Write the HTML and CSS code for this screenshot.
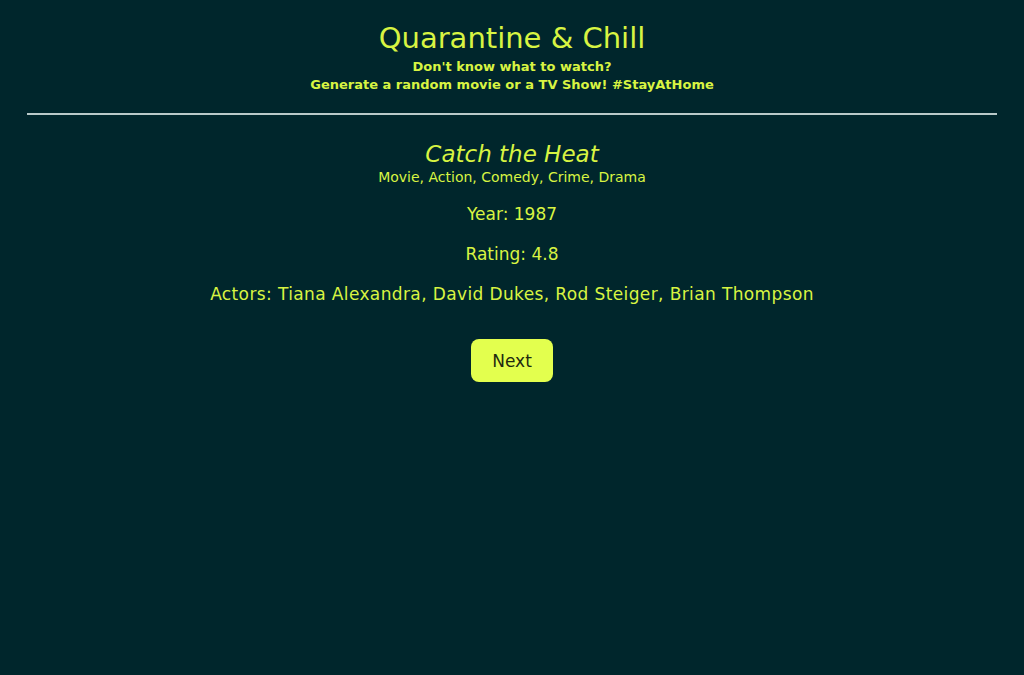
FILE: index.html
```html
<!DOCTYPE html>
<html lang="en">
<head>
<meta charset="utf-8">
<title>Quarantine &amp; Chill</title>
<link rel="stylesheet" href="styles.css">
</head>
<body>
<header class="header">
  <h1 class="title">Quarantine &amp; Chill</h1>
  <p class="tagline">Don't know what to watch?<br>Generate a random movie or a TV Show! #StayAtHome</p>
</header>
<hr class="divider">
<main class="show">
  <h2 class="show-name">Catch the Heat</h2>
  <p class="genres">Movie, Action, Comedy, Crime, Drama</p>
  <p class="info">Year: 1987</p>
  <p class="info">Rating: 4.8</p>
  <p class="info actors">Actors: Tiana Alexandra, David Dukes, Rod Steiger, Brian Thompson</p>
  <button class="next" type="button">Next</button>
</main>
</body>
</html>
```
FILE: styles.css
```css
html, body {
  margin: 0;
  padding: 0;
}
body {
  background: #00262c;
  color: #d8f442;
  font-family: "DejaVu Sans", "Open Sans", sans-serif;
  text-align: center;
  padding: 0 27px;
  min-height: 675px;
  box-sizing: border-box;
}
.header {
  padding-top: 20px;
}
.title {
  margin: 0;
  font-size: 29px;
  font-weight: 500;
  line-height: 36px;
}
.tagline {
  margin: 2px 0 0;
  font-size: 13px;
  font-weight: bold;
  line-height: 18px;
}
.divider {
  margin: 19px 0 0;
  border: 0;
  height: 2px;
  background: #b9c9c9;
}
.show {
  display: flex;
  flex-direction: column;
  align-items: center;
  padding-top: 25px;
}
.show-name {
  margin: 0;
  font-size: 23px;
  font-style: italic;
  font-weight: 500;
  line-height: 28px;
}
.genres {
  margin: 0;
  font-size: 14px;
  line-height: 18px;
}
.info {
  margin: 16px 0 0;
  font-size: 17px;
  line-height: 24px;
}
.actors {
  letter-spacing: 0.38px;
}
.next {
  margin-top: 33px;
  width: 82px;
  height: 43px;
  border: 0;
  border-radius: 8px;
  background: #e3ff4e;
  color: #1e2a10;
  font-family: inherit;
  font-size: 17px;
}
```
